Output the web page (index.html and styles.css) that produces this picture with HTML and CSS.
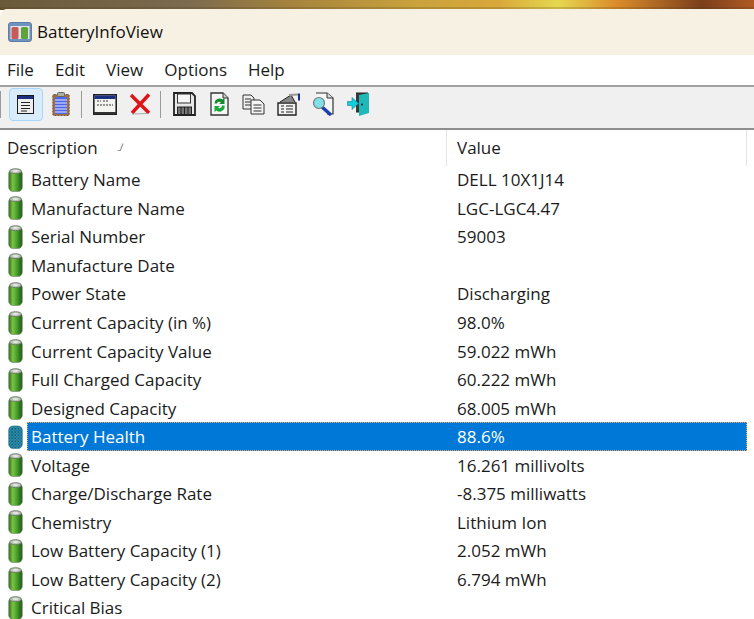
FILE: index.html
```html
<!DOCTYPE html>
<html lang="en">
<head>
    <meta charset="UTF-8">
    <meta name="viewport" content="width=device-width, initial-scale=1.0">
    <title>BatteryInfoView</title>
    <link rel="stylesheet" href="styles.css">
</head>
<body>

    <svg class="defs" width="0" height="0">
        <defs>
            <linearGradient id="cell" x1="0" x2="1" y1="0" y2="0">
                <stop offset="0" stop-color="#2c6a1c"/>
                <stop offset="0.3" stop-color="#7cc444"/>
                <stop offset="0.6" stop-color="#46a02a"/>
                <stop offset="1" stop-color="#1f5514"/>
            </linearGradient>
            <pattern id="dots" width="3" height="3" patternUnits="userSpaceOnUse">
                <rect width="3" height="3" fill="#2f9a86"/>
                <rect width="1.5" height="1.5" fill="#14549e"/>
                <rect x="1.5" y="1.5" width="1.5" height="1.5" fill="#1a6fc0"/>
            </pattern>
            <symbol id="battery" viewBox="0 0 14 23">
                <rect x="0.5" y="1.5" width="13" height="21" rx="4" fill="url(#cell)" stroke="#7b8f75" stroke-width="0.7"/>
                <ellipse cx="7" cy="3" rx="5.6" ry="2.4" fill="#b9c0b5" stroke="#5f6a5b" stroke-width="0.7"/>
                <ellipse cx="7" cy="2.8" rx="3" ry="1" fill="#e4e8e2"/>
            </symbol>
            <symbol id="battery-sel" viewBox="0 0 14 23">
                <rect x="0.5" y="1" width="13" height="21.5" rx="4" fill="url(#dots)" stroke="#3c7f9a" stroke-width="0.7"/>
            </symbol>
        </defs>
    </svg>

    <div class="wallpaper"></div>

    <div class="window">
        <div class="titlebar">
            <svg class="app-icon" width="24" height="20" viewBox="0 0 24 20">
                <rect x="0.5" y="0.5" width="23" height="19" rx="2.5" fill="#6f93bd" stroke="#5c7ea8"/>
                <rect x="2.5" y="4" width="19" height="13" fill="#dfe5ea"/>
                <rect x="3.5" y="5" width="7" height="12" rx="1.5" fill="#c95a58"/>
                <rect x="13" y="5" width="7" height="12" rx="1.5" fill="#5fa23a"/>
            </svg>
            <span class="app-title">BatteryInfoView</span>
        </div>

        <div class="menubar">
            <span class="menu-item">File</span>
            <span class="menu-item">Edit</span>
            <span class="menu-item">View</span>
            <span class="menu-item">Options</span>
            <span class="menu-item">Help</span>
        </div>

        <div class="toolbar">
            <span class="tool-sep tool-sep-first"></span>
            <button class="tool-button active">
                <svg width="17" height="19" viewBox="0 0 17 19">
                    <rect x="0.5" y="0.5" width="16" height="18" fill="#eeeeee" stroke="#1a1a1a"/>
                    <rect x="1" y="1" width="15" height="3" fill="#1c2f80"/>
                    <path d="M4 7.5h9M4 10.5h9M4 13.5h9M4 16h6" stroke="#222" stroke-width="1.2"/>
                </svg>
            </button>
            <button class="tool-button">
                <svg width="18" height="24" viewBox="0 0 18 24">
                    <rect x="0.8" y="2.5" width="16.4" height="21" rx="1" fill="#a0703c" stroke="#7a5a40" stroke-dasharray="2 1"/>
                    <rect x="3" y="5" width="12" height="17" fill="#4f66e8"/>
                    <path d="M3 8h12M3 11h12M3 14h12M3 17h12M3 20h12" stroke="#e8ecff" stroke-width="1"/>
                    <rect x="5.5" y="0.5" width="7" height="4" rx="1" fill="#a8b0a0" stroke="#666"/>
                </svg>
            </button>
            <span class="tool-sep"></span>
            <button class="tool-button">
                <svg width="24" height="21" viewBox="0 0 24 21">
                    <rect x="0.8" y="0.8" width="22.4" height="19.4" fill="#f4f4f0" stroke="#222" stroke-width="1.6"/>
                    <rect x="1.5" y="1.5" width="21" height="3.5" fill="#1c2f80"/>
                    <path d="M4 7h4M10 7h5M4 11h16" stroke="#333" stroke-dasharray="2 1"/>
                    <rect x="1" y="18" width="22" height="2" fill="#333"/>
                </svg>
            </button>
            <button class="tool-button">
                <svg width="22" height="22" viewBox="0 0 22 22">
                    <path d="M2 2L20 20M20 1.5L3 20" stroke="#e01414" stroke-width="3.4" fill="none"/>
                    <path d="M3 21L19 20.5" stroke="#999" stroke-width="0.8" fill="none"/>
                </svg>
            </button>
            <span class="tool-sep"></span>
            <button class="tool-button">
                <svg width="23" height="24" viewBox="0 0 23 24">
                    <path d="M1 1H19L22 4V23H1Z" fill="#e8e8e8" stroke="#222" stroke-width="1.8"/>
                    <rect x="4.5" y="2" width="13" height="9" fill="#f6f6f6" stroke="#333"/>
                    <rect x="4.5" y="15" width="14" height="7.5" fill="#777" stroke="#222"/>
                    <path d="M8 15v7M11.5 15v7M15 15v7" stroke="#222"/>
                </svg>
            </button>
            <button class="tool-button">
                <svg width="19" height="24" viewBox="0 0 19 24">
                    <path d="M1 1H13L18 6V23H1Z" fill="#f6f6f6" stroke="#333" stroke-width="1.3"/>
                    <path d="M13 1V6H18" fill="#ccc" stroke="#333"/>
                    <path d="M4.5 11.5A5 5 0 0 1 12.5 7.5L14.5 6V12H9L11 10.2A2.6 2.6 0 0 0 7 11.5Z" fill="#138a2c"/>
                    <path d="M14.5 13.5A5 5 0 0 1 6.5 18.5L4.5 20V14H10L8 15.8A2.6 2.6 0 0 0 12 13.5Z" fill="#1aa83a"/>
                </svg>
            </button>
            <button class="tool-button">
                <svg width="23" height="21" viewBox="0 0 23 21">
                    <path d="M1 1H9L12 4V15H1Z" fill="#eee" stroke="#333"/>
                    <path d="M3 5h6M3 8h6M3 11h6" stroke="#333"/>
                    <path d="M9 6H18L22 10V20H9Z" fill="#f4f4f4" stroke="#333"/>
                    <path d="M11.5 11h8M11.5 14h8M11.5 17h8" stroke="#333"/>
                </svg>
            </button>
            <button class="tool-button">
                <svg width="24" height="23" viewBox="0 0 24 23">
                    <path d="M1 10H19V22H1Z" fill="#f2f2f2" stroke="#222" stroke-width="1.4"/>
                    <path d="M3 9L14 2L18 9" fill="#888" stroke="#222"/>
                    <path d="M12 2L21 1.5" stroke="#999" stroke-width="2"/>
                    <rect x="21" y="0.5" width="2" height="7" fill="#1a2f90"/>
                    <path d="M4 13h3M9 13h7M4 16h3M9 16h7M4 19h3M9 19h7" stroke="#222"/>
                </svg>
            </button>
            <button class="tool-button">
                <svg width="23" height="25" viewBox="0 0 23 25">
                    <path d="M4 1H15L21 6V22H15" fill="#f6f6f6" stroke="#333" stroke-width="1.2"/>
                    <path d="M15 1V6H21" fill="#ddd" stroke="#333"/>
                    <path d="M10 15L19 23" stroke="#1c3fb0" stroke-width="3.4"/>
                    <circle cx="7" cy="11" r="5.5" fill="#7fe0ea" stroke="#777" stroke-width="1.2"/>
                </svg>
            </button>
            <button class="tool-button">
                <svg width="23" height="24" viewBox="0 0 23 24">
                    <path d="M9 1H21V20H9" fill="#3a3a3a" stroke="#222"/>
                    <path d="M12 3L22 1V21L12 24Z" fill="#20b8b8"/>
                    <circle cx="15" cy="12.5" r="1" fill="#123"/>
                    <path d="M0.5 9.5H5V5.5L11.5 11.5L5 17.5V13.5H0.5Z" fill="#10d0e0" stroke="#0d7f8a" stroke-width="0.6"/>
                </svg>
            </button>
        </div>

        <div class="list-header">
            <div class="col-desc">
                <span>Description</span>
                <svg class="sort-mark" width="10" height="10" viewBox="0 0 10 10">
                    <path d="M7 1.5L4.5 8M1.5 8.5H5" stroke="#9a9a9a" stroke-width="1.2" fill="none"/>
                </svg>
            </div>
            <div class="col-value">Value</div>
            <div class="col-rest"></div>
        </div>

        <div class="list">
            <div class="list-row">
                <svg class="row-icon"><use href="#battery"/></svg>
                <div class="row-body"><span class="cell-desc">Battery Name</span><span class="cell-value">DELL 10X1J14</span></div>
            </div>
            <div class="list-row">
                <svg class="row-icon"><use href="#battery"/></svg>
                <div class="row-body"><span class="cell-desc">Manufacture Name</span><span class="cell-value">LGC-LGC4.47</span></div>
            </div>
            <div class="list-row">
                <svg class="row-icon"><use href="#battery"/></svg>
                <div class="row-body"><span class="cell-desc">Serial Number</span><span class="cell-value">59003</span></div>
            </div>
            <div class="list-row">
                <svg class="row-icon"><use href="#battery"/></svg>
                <div class="row-body"><span class="cell-desc">Manufacture Date</span><span class="cell-value"></span></div>
            </div>
            <div class="list-row">
                <svg class="row-icon"><use href="#battery"/></svg>
                <div class="row-body"><span class="cell-desc">Power State</span><span class="cell-value">Discharging</span></div>
            </div>
            <div class="list-row">
                <svg class="row-icon"><use href="#battery"/></svg>
                <div class="row-body"><span class="cell-desc">Current Capacity (in %)</span><span class="cell-value">98.0%</span></div>
            </div>
            <div class="list-row">
                <svg class="row-icon"><use href="#battery"/></svg>
                <div class="row-body"><span class="cell-desc">Current Capacity Value</span><span class="cell-value">59.022 mWh</span></div>
            </div>
            <div class="list-row">
                <svg class="row-icon"><use href="#battery"/></svg>
                <div class="row-body"><span class="cell-desc">Full Charged Capacity</span><span class="cell-value">60.222 mWh</span></div>
            </div>
            <div class="list-row">
                <svg class="row-icon"><use href="#battery"/></svg>
                <div class="row-body"><span class="cell-desc">Designed Capacity</span><span class="cell-value">68.005 mWh</span></div>
            </div>
            <div class="list-row selected">
                <svg class="row-icon"><use href="#battery-sel"/></svg>
                <div class="row-body"><span class="cell-desc">Battery Health</span><span class="cell-value">88.6%</span></div>
            </div>
            <div class="list-row">
                <svg class="row-icon"><use href="#battery"/></svg>
                <div class="row-body"><span class="cell-desc">Voltage</span><span class="cell-value">16.261 millivolts</span></div>
            </div>
            <div class="list-row">
                <svg class="row-icon"><use href="#battery"/></svg>
                <div class="row-body"><span class="cell-desc">Charge/Discharge Rate</span><span class="cell-value">-8.375 milliwatts</span></div>
            </div>
            <div class="list-row">
                <svg class="row-icon"><use href="#battery"/></svg>
                <div class="row-body"><span class="cell-desc">Chemistry</span><span class="cell-value">Lithium Ion</span></div>
            </div>
            <div class="list-row">
                <svg class="row-icon"><use href="#battery"/></svg>
                <div class="row-body"><span class="cell-desc">Low Battery Capacity (1)</span><span class="cell-value">2.052 mWh</span></div>
            </div>
            <div class="list-row">
                <svg class="row-icon"><use href="#battery"/></svg>
                <div class="row-body"><span class="cell-desc">Low Battery Capacity (2)</span><span class="cell-value">6.794 mWh</span></div>
            </div>
            <div class="list-row">
                <svg class="row-icon"><use href="#battery"/></svg>
                <div class="row-body"><span class="cell-desc">Critical Bias</span><span class="cell-value"></span></div>
            </div>
        </div>
    </div>

</body>
</html>
```

FILE: styles.css
```css
/* BatteryInfoView window */

:root {
    --title-color: #f7f1e3;
    --toolbar-color: #f0f0f0;
    --line-color: #a0a0a0;
    --select-color: #0078d7;
    --text-color: #1b1b1b;
}

html, body {
    height: 100%;
}

body {
    margin: 0;
    overflow: hidden;
    background-color: #ffffff;
    color: var(--text-color);
    font-family: 'Open Sans', 'Noto Sans', sans-serif;
    font-size: 17px;
}

.defs {
    display: block;
    height: 0;
}

/* --- Desktop showing above the window --- */
.wallpaper {
    height: 10px;
    background: linear-gradient(90deg, #6b5a3a 0%, #7c6a4e 25%, #a8863c 40%, #c9a23c 55%, #d8a83a 66%, #e6d850 74%, #d98a2a 82%, #7a3f1c 93%, #b05a24 100%);
    box-shadow: inset 0 -3px 0 rgba(70, 50, 20, 0.2);
}

.window {
    margin-top: -1px;
    border-top-left-radius: 8px;
    overflow: hidden;
    background-color: #ffffff;
}

/* --- Title bar --- */
.titlebar {
    height: 46px;
    display: flex;
    align-items: center;
    padding: 0 0 1px 8px;
    background-color: var(--title-color);
    box-sizing: border-box;
}

.app-icon {
    margin-right: 5px;
    flex-shrink: 0;
}

.app-title {
    color: #111111;
}

/* --- Menu --- */
.menubar {
    height: 30px;
    display: flex;
    align-items: center;
    padding: 0 0 2px 7px;
    gap: 21px;
    box-sizing: border-box;
}

/* --- Toolbar --- */
.toolbar {
    height: 45px;
    display: flex;
    align-items: center;
    padding-bottom: 7px;
    background-color: var(--toolbar-color);
    border-top: 2px solid var(--line-color);
    border-bottom: 2px solid #8e8e8e;
    box-sizing: border-box;
}

.tool-button {
    width: 34.7px;
    height: 33px;
    padding: 0;
    border: 1px solid transparent;
    border-radius: 4px;
    background: transparent;
    display: flex;
    align-items: center;
    justify-content: center;
    box-sizing: border-box;
}

.tool-button.active {
    background-color: #d9ecfb;
    border-color: #a9d6f8;
}

.tool-sep {
    width: 1px;
    height: 27px;
    margin: 0 6px 0 3px;
    background-color: #9a9a9a;
}

.tool-sep-first {
    margin: 0 7.5px 0 0;
}

/* --- List header --- */
.list-header {
    height: 35.5px;
    display: flex;
    align-items: center;
    box-sizing: border-box;
}

.col-desc {
    width: 447px;
    height: 100%;
    display: flex;
    align-items: center;
    padding: 0 0 1px 7px;
    border-right: 1px solid #e5e5e5;
    box-sizing: border-box;
}

.sort-mark {
    margin-left: 18px;
}

.col-value {
    width: 300px;
    height: 100%;
    display: flex;
    align-items: center;
    padding: 0 0 1px 10px;
    border-right: 1px solid #e5e5e5;
    box-sizing: border-box;
}

/* --- List rows --- */
.list-row {
    height: 28.55px;
    display: flex;
    align-items: center;
}

.row-icon {
    width: 15px;
    height: 24px;
    margin-left: 7.5px;
    margin-right: 4.5px;
    flex-shrink: 0;
}

.row-body {
    width: 720px;
    height: 100%;
    display: flex;
    align-items: center;
    box-sizing: border-box;
}

.cell-desc {
    width: 430px;
    padding-left: 4px;
    box-sizing: border-box;
    white-space: nowrap;
}

.cell-value {
    white-space: nowrap;
}

.list-row.selected .row-body {
    background-color: var(--select-color);
    color: #ffffff;
    outline: 1px dotted #f0a860;
    outline-offset: -1px;
}
```
